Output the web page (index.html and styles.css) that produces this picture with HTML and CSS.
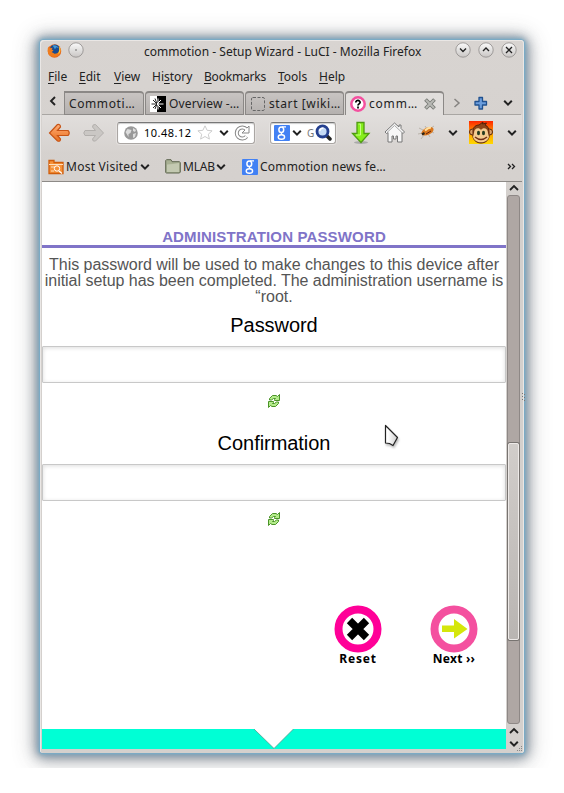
FILE: index.html
```html
<!DOCTYPE html>
<html lang="en">
<head>
<meta charset="utf-8">
<title>commotion - Setup Wizard - LuCI</title>
<link rel="stylesheet" href="styles.css">
</head>
<body>
<svg class="defs" width="0" height="0">
  <defs>
    <linearGradient id="btn" x2="0" y2="1"><stop stop-color="#fafafa"/><stop offset="1" stop-color="#c9c6c4"/></linearGradient>
    <linearGradient id="org" x2="0" y2="1"><stop stop-color="#ffad76"/><stop offset="1" stop-color="#e9701f"/></linearGradient>
    <linearGradient id="fire" x2="0" y2="1"><stop stop-color="#ff2500"/><stop offset=".5" stop-color="#ff9b00"/><stop offset="1" stop-color="#ffd900"/></linearGradient>
    <linearGradient id="cur"><stop offset=".2" stop-color="#fff"/><stop offset="1" stop-color="#ccc"/></linearGradient>
    <symbol id="down" viewBox="0 0 10 8"><path d="M1.2 1.8 5 5.6 8.8 1.8" fill="none" stroke="currentColor" stroke-width="2"/></symbol>
    <symbol id="up" viewBox="0 0 10 8"><path d="M1 6 5 2 9 6" fill="none" stroke="currentColor" stroke-width="1.8"/></symbol>
    <symbol id="google" viewBox="0 0 16 16"><rect width="16" height="16" rx="1" fill="#4281f4"/><g fill="none" stroke="#fff"><ellipse cx="7.3" cy="4.8" rx="2.4" ry="2.8" stroke-width="1.5"/><path d="M8 1.8h4M8 7.6c-1.3.9-.6 1.5.5 2" stroke-width="1.2"/><ellipse cx="7.4" cy="12" rx="3.2" ry="2.2" stroke-width="1.4"/></g></symbol>
    <symbol id="refresh" viewBox="0 0 12 14"><g fill="#b4ec8b" stroke="#4a9328" stroke-width="1"><path d="M1.500 6V4.500L4.500 1.500H8L9.500 2.500L11.500 .5V6.500H6.500V5.500L7.500 4.500H5.500L3.500 6z"/><path d="M10.500 8V9.500L7.500 12.500H4L2.500 11.500L.5 13.500V7.500H5.500V8.500L4.500 9.500H6.500L8.500 8z"/></g></symbol>
  </defs>
</svg>
<div class="backdrop">
<div class="window">
  <header class="titlebar">
    <svg class="fox" viewBox="0 0 16 16"><circle cx="8" cy="8" r="7.2" fill="#e4681b"/><circle cx="8.500" cy="6.500" r="5.500" fill="#174c91"/><path d="M6 2c3-1 6 1 6.500 3L10 4 8.500 6z" fill="#4198d7"/><path d="M1.300 3.500 3 5l3-.5-1 2 2 1-2 1.500 3 2c3 0 5-2 5-5l-.5-3c3 3 2.500 7 .5 9-3 3-8 3-11 0C.5 10 .3 6 1.300 3.500" fill="#ef7c1d"/><path d="M13 3c2 3 1.500 7-1 8.500 1-3 1.500-5 1-8.500" fill="#ffd43d"/></svg>
    <svg class="wbtn pin" viewBox="0 0 16 16"><circle cx="8" cy="8" r="7.200" fill="url(#btn)" stroke="#8f8c8a" stroke-width=".8"/><rect x="7.500" y="7.500" width="1" height="1"/></svg>
    <span class="wtitle">commotion - Setup Wizard - LuCI - Mozilla Firefox</span>
    <svg class="wbtn" viewBox="0 0 16 16"><circle cx="8" cy="8" r="7.200" fill="url(#btn)" stroke="#8f8c8a" stroke-width=".8"/><path d="m5 6.500 3 3 3-3" fill="none" stroke="#222" stroke-width="1.400"/></svg>
    <svg class="wbtn" viewBox="0 0 16 16"><circle cx="8" cy="8" r="7.200" fill="url(#btn)" stroke="#8f8c8a" stroke-width=".8"/><path d="m5 9 3-3 3 3" fill="none" stroke="#222" stroke-width="1.400"/></svg>
    <svg class="wbtn" viewBox="0 0 16 16"><circle cx="8" cy="8" r="7.200" fill="url(#btn)" stroke="#8f8c8a" stroke-width=".8"/><path d="m5 5 6 6m0-6-6 6" fill="none" stroke="#222" stroke-width="1.300"/></svg>
  </header>
  <nav class="menu">
    <span class="m-file"><u>F</u>ile</span><span class="m-edit"><u>E</u>dit</span><span class="m-view"><u>V</u>iew</span><span class="m-hist">Hi<u>s</u>tory</span><span class="m-book"><u>B</u>ookmarks</span><span class="m-tool"><u>T</u>ools</span><span class="m-help"><u>H</u>elp</span>
  </nav>
  <div class="tabs">
    <div class="tabprev"><svg width="8" height="10" viewBox="0 0 8 10"><path d="M6 1 2 5l4 4" fill="none" stroke="#222" stroke-width="1.900"/></svg></div>
    <div class="tab first"><span class="t1">Commoti…</span></div>
    <div class="tab"><svg width="16" height="16" viewBox="0 0 16 16"><path fill="#fff" d="M0 0h7v16H0z"/><path d="M7 0h9v16H7z"/><path d="M1.500 8H7M3 4l4 4-4 4M5 2.500 7 8l-2 5" fill="none" stroke="#222"/><path d="M7 8h6.500M7 8l4-4M7 8l4 4M8 2.500v11" stroke="#fff"/></svg><span class="t2">Overview -…</span></div>
    <div class="tab"><svg width="16" height="16" viewBox="0 0 16 16"><rect x="1.500" y="1.500" width="13" height="13" rx="1.500" fill="none" stroke="#666" stroke-dasharray="3 1.500"/></svg><span class="t3">start [wiki…</span></div>
    <div class="tab active"><svg width="16" height="16" viewBox="0 0 16 16"><circle cx="8" cy="8" r="6.700" fill="#fff" stroke="#f4509f" stroke-width="2.500"/><path d="M5.800 6.500c0-3 4.500-2.500 4.300 0C10 8 8 7.800 8 9.500M8 10.500v2" fill="none" stroke="#000" stroke-width="1.700"/></svg><span class="t4">comm…</span><svg class="close" width="12" height="12" viewBox="0 0 12 12"><path d="m1.500 1.500 9 9m0-9-9 9" stroke="#777a75" stroke-width="3.800"/><path d="m2 2 8 8m0-8-8 8" stroke="#b8b9b5" stroke-width="2"/></svg></div>
    <div class="tabtools">
      <svg width="8" height="10" viewBox="0 0 8 10"><path d="m1.500 1 4.500 4-4.500 4" fill="none" stroke="#858380" stroke-width="1.500"/></svg>
      <svg class="plus" width="14" height="14" viewBox="0 0 14 14"><path d="M5 1.500h3.500v4h4V9h-4v4H5V9H1V5.500h4z" fill="#6b9ddc" stroke="#20518f" stroke-width="1.300" stroke-linejoin="round"/></svg>
      <svg class="more" width="10" height="8"><use href="#down"/></svg>
    </div>
  </div>
  <div class="navbar">
    <svg class="back" width="23" height="20" viewBox="0 0 23 20"><path d="M9.500 1.500 1.500 10l8 8q3 1 3-2l-3-3.500H20q2.500-2.500 0-5H9.500l3-3.500q0-3-3-2.500" fill="url(#org)" stroke="#c75416" stroke-width="1.200"/></svg>
    <svg class="fwd" width="23" height="20" viewBox="0 0 23 20"><path d="m13.500 1.500 8 8.500-8 8q-3 1-3-2l3-3.500H3Q.5 10 3 7.500h10.500l-3-3.500q0-3 3-2.500" fill="#cac7c4" stroke="#b2afac"/></svg>
    <div class="field url">
      <svg width="14" height="14" viewBox="0 0 14 14"><circle cx="7" cy="7" r="6.800" fill="#999"/><path d="m1.500 6 2-3 4 1-1 3-2 1v3zM9 2l3 2-1 2-2-1zm0 6 3-1-1 4-2 1z" fill="#ddd"/></svg>
      <span class="addr">10.48.12</span>
      <svg class="star" width="16" height="15" viewBox="0 0 16 15"><path d="m8 .8 2.100 4.500 5 .5-3.800 3.400 1.100 4.900L8 11.500l-4.400 2.600 1.100-4.900L.9 5.800l5-.5z" fill="#fff" stroke="#ccc"/></svg>
      <svg class="udown" width="10" height="8"><use href="#down"/></svg>
      <svg class="reload" width="16" height="16" viewBox="0 0 16 16"><path d="M12.500 11.500a5.500 5.500 0 1 1 0-7" fill="none" stroke="#888" stroke-width="4"/><path d="M15 1v7H8z" fill="#fff" stroke="#888"/><path d="M12.500 11.500a5.500 5.500 0 1 1 0-7" fill="none" stroke="#fff" stroke-width="2"/></svg>
    </div>
    <div class="field search">
      <svg width="16" height="16"><use href="#google"/></svg>
      <svg class="sdown" width="10" height="8"><use href="#down"/></svg>
      <span class="g">G</span>
      <svg class="lens" width="17" height="17" viewBox="0 0 17 17"><path d="m11 11 4 4" stroke="#222" stroke-width="3.500" stroke-linecap="round"/><circle cx="7.500" cy="7.500" r="5.500" fill="#c4daf6" stroke="#25408f" stroke-width="2.800"/><path d="M4.500 7q1-3 4-3" fill="none" stroke="#fff" stroke-width="1.500"/></svg>
    </div>
    <svg class="dl" width="20" height="24" viewBox="0 0 20 24"><ellipse cx="10" cy="21.500" rx="7" ry="1.500" fill="#aaa"/><path d="M6 1.500h7v11h5L10 21.500 1.500 12.500H6z" fill="#86ee1c" stroke="#4f9c12" stroke-width="1.300"/><path d="M7.500 3h2v11H5" fill="none" stroke="#c4ff83"/></svg>
    <svg class="home" width="21" height="21" viewBox="0 0 21 21"><path d="M10.500 1 1 10l1.500 1.500 1.500-1V20h4v-6h1.500v3H12v-3h1.500v6H18v-9.500l1 1 1.500-1.500L17 6.500V3h-2v2z" fill="#f7f7f7" stroke="#777" stroke-linejoin="round"/><path d="m3 10.500 7.500-7 7.500 7" fill="none" stroke="#aaa"/></svg>
    <svg class="bug" width="18" height="15" viewBox="0 0 18 15"><path d="m5 5-4-2m4 5-5 1m6 1-3 4m7-5 2 3m0-6 4 2M9 4 7 1m6 2 3-2" stroke="#aaa498" stroke-width=".7" fill="none"/><ellipse cx="9.500" cy="6.300" rx="6.500" ry="3.600" transform="rotate(-25 9.500 6.300)" fill="#d9771d"/><path d="M7 5.500q3-3 6-3" stroke="#ffe0a0" stroke-width="2" fill="none"/><path d="M3.500 8.500 6 7l1 2-2.500 1.500z" fill="#2c2518"/><path d="m8 9 5-3" stroke="#641e09"/></svg>
    <svg class="ddown" width="10" height="8"><use href="#down"/></svg>
    <svg class="monkey" width="24" height="23" viewBox="0 0 24 23"><path fill="url(#fire)" d="M0 0h24v23H0z"/><circle cx="3.500" cy="11" r="3" fill="#dba169" stroke="#5a260b"/><circle cx="20.500" cy="11" r="3" fill="#dba169" stroke="#5a260b"/><path d="M4 10c0-4 3-6 6-6l4-3-.5 2 4-1-1.500 2c3 1 4 4 4 7v5c-2 8-14 8-16 0z" fill="#8c4619" stroke="#542008"/><path d="M5 12c0-5 5-6 7-3 2-3 7-2 7 3l1 4c-2 7-14 7-16 0z" fill="#f4cb91"/><ellipse cx="9.500" cy="12" rx="1.500" ry="2.200" fill="#263b20"/><ellipse cx="14.500" cy="12" rx="1.500" ry="2.200" fill="#263b20"/><path d="M6 16q6 5 12 0" fill="none" stroke="#702f17" stroke-width="1.500"/></svg>
    <svg class="edown" width="10" height="8"><use href="#down"/></svg>
  </div>
  <div class="bookmarks">
    <svg class="bmv" width="16" height="16" viewBox="0 0 16 16"><path d="M1 14.500v-13h5v2h9v11z" fill="#f59138" stroke="#cf5d0b" stroke-width="1.300"/><path d="M1 5.500h14M3 8h4M3 12h3" stroke="#ffe0bd"/><circle cx="9" cy="9.500" r="2.700" fill="none" stroke="#fff"/><path d="m11 12 3 2.500" stroke="#fff" stroke-width="1.300"/></svg>
    <span class="b1">Most Visited</span><svg class="bd1" width="10" height="8"><use href="#down"/></svg>
    <svg class="bml" width="16" height="15" viewBox="0 0 16 15"><path d="M.7 13.500V1.500L1.500.7H6l1 2h7.500l.8 1V13l-.8 1H1.500z" fill="#a8b093" stroke="#5e664f"/><path d="M2 13V5.500l6-.5 6-1v9z" fill="#c3c9b1"/></svg>
    <span class="b2">MLAB</span><svg class="bd2" width="10" height="8"><use href="#down"/></svg>
    <svg class="bg" width="16" height="16"><use href="#google"/></svg>
    <span class="b3">Commotion news fe…</span>
    <svg class="over" width="9" height="7" viewBox="0 0 9 7"><path d="m1 1 2.500 2.500L1 6m4-5 2.500 2.500L5 6" fill="none" stroke="#222" stroke-width="1.300"/></svg>
  </div>
  <div class="view">
    <main class="page">
      <h1><span>ADMINISTRATION PASSWORD</span></h1>
      <p class="intro"><span class="l1">This password will be used to make changes to this device after</span><br><span class="l2">initial setup has been completed. The administration username is</span><br><span class="l3">“root.</span></p>
      <label class="pw" for="pw"><span>Password</span></label>
      <input id="pw" type="password">
      <svg class="refresh" width="12" height="14"><use href="#refresh"/></svg>
      <label class="cf" for="cf"><span>Confirmation</span></label>
      <input id="cf" type="password">
      <svg class="refresh" width="12" height="14"><use href="#refresh"/></svg>
      <div class="actions">
        <div class="action"><svg width="48" height="48" viewBox="0 0 48 48"><circle cx="24" cy="24" r="19.500" fill="#fff" stroke="#ff0098" stroke-width="8"/><path d="m15.500 15.500 17 17m0-17-17 17" stroke="#000" stroke-width="7.500"/></svg><span class="reset">Reset</span></div>
        <div class="action"><svg width="48" height="48" viewBox="0 0 48 48"><circle cx="24" cy="24" r="19.500" fill="#fff" stroke="#f4509f" stroke-width="8"/><path d="M12 20.500h12V14l13.500 10L24 33.500V27H12z" fill="#d5e60b"/></svg><span class="next">Next ››</span></div>
      </div>
      <footer><svg width="464" height="20" viewBox="0 0 464 20"><path d="M0 0h212l20 19.500L251.500 0H464v20H0z" fill="#00ffd5"/><path d="m212 0 20 19.500L251.500 0" fill="none" stroke="#4e9d8e" stroke-width=".8"/></svg></footer>
    </main>
    <div class="scroll">
      <svg width="10" height="8"><use href="#up"/></svg>
      <div class="track"><div class="thumb"></div></div>
      <svg width="10" height="8"><use href="#up"/></svg>
      <svg class="sd" width="10" height="8"><use href="#down"/></svg>
    </div>
  </div>
  <svg class="grip" width="6" height="6"><path d="M4 0h1v1H4zM2 2h1v1H2zM4 2h1v1H4zM0 4h1v1H0zM2 4h1v1H2zM4 4h1v1H4z" fill="#888"/></svg>
  <svg class="dots" width="3" height="8"><path d="M0 0h1v1H0zM2 1h1v1H2zM0 3h1v1H0zM2 4h1v1H2zM0 6h1v1H0zM2 7h1v1H2z" fill="#777"/></svg>
</div>
</div>
<svg class="cursor" width="18" height="25" viewBox="0 0 18 25"><path d="M1.500 1.500v17.500l4 .5 3.500 2 4.500-8z" fill="url(#cur)" stroke="#222" stroke-width="1.200" stroke-linejoin="round"/></svg>
</body>
</html>
```
FILE: styles.css
```css
* { box-sizing: border-box; }
body { margin: 0; width: 564px; height: 793px; background: #fff; overflow: hidden; font: 12px "Noto Sans", sans-serif; color: #222; }
svg { display: block; flex: none; }
.defs { position: absolute; }
span { white-space: nowrap; }
.backdrop { height: 768px; padding: 40px; overflow: hidden; }
.window { position: relative; width: 484px; height: 713px; border-radius: 4px 4px 3px 3px; background: linear-gradient(#d8d4d1, #d4d0cd 180px); padding: 0 2px 4px; box-shadow: 0 0 1px 1px #7aabc6, 0 0 4px 2px rgba(122,171,198,.8), 0 1px 12px 4px rgba(70,90,112,.6), 0 2px 22px 6px rgba(60,60,60,.28), inset 1px 1px 0 #eae7e5, inset -1px 0 0 #eae7e5; }

.titlebar { display: flex; height: 24px; padding: 2px 5px 0 5px; align-items: flex-start; }
.fox { width: 15px; height: 16px; margin-top: 1px; }
.wbtn { width: 16px; height: 16px; margin-right: 7px; }
.wbtn:last-child { margin-right: 0; }
.pin { margin: 0 60px 0 6px; }
.wtitle { width: 312px; line-height: 20px; letter-spacing: .03px; }

.menu { display: flex; height: 27px; padding-left: 6px; line-height: 26px; }
.menu u { text-underline-offset: 2px; }
.m-file { width: 31px; }
.m-edit { width: 35px; }
.m-view { width: 38px; }
.m-hist { width: 52px; }
.m-book { width: 74px; letter-spacing: -.2px; }
.m-tool { width: 41px; }

.tabs { display: flex; height: 24px; width: 479px; }
.tabprev { width: 22px; padding: 5px 0 0 7px; border-bottom: 1px solid #a9a6a3; }
.tab { display: flex; align-items: center; width: 99px; height: 24px; margin-right: 1px; padding: 1px 0 0 4px; border: 1px solid #8b8886; border-top-width: 2px; border-radius: 4px 4px 0 0; background: linear-gradient(#c8c4c2, #b5b1af); line-height: 22px; }
.tab svg { margin-right: 3px; }
.tab.first { width: 80px; border-radius: 0 4px 0 0; }
.t1, .t3 { letter-spacing: .6px; }
.t2 { letter-spacing: .15px; }
.t4 { letter-spacing: .8px; }
.tab.active { background: #e1dedc; border-bottom: 0; margin-right: 0; padding-top: 0; }
.tab .close { margin: 0 0 0 6px; }
.tabtools { display: flex; align-items: center; flex: 1; border-bottom: 1px solid #a9a6a3; padding-left: 9px; }
.plus { margin-left: 13px; }
.more { margin-left: 15px; }

.navbar { display: flex; align-items: center; height: 37px; padding: 0 0 2px 6px; background: linear-gradient(#e1dedc, #d6d2cf); }
.fwd { margin-left: 11px; }
.field { display: flex; align-items: center; height: 22px; background: #fff; border: 1px solid #aaa6a3; border-top-color: #777; border-radius: 3px; box-shadow: inset 0 1px 1px #ccc, 0 0 0 1px #e5e2e0; }
.url { width: 138px; margin-left: 12px; padding-left: 6px; }
.addr { width: 52px; margin-left: 6px; font-size: 11px; letter-spacing: .5px; color: #000; }
.star { margin-left: 1px; }
.udown { margin-left: 6px; }
.reload { margin-left: 5px; }
.search { width: 66px; margin-left: 15px; padding-left: 3px; }
.sdown { margin-left: 2px; }
.g { width: 7px; margin: 0 1px 0 5px; font-size: 10px; color: #777; }
.dl { margin-left: 15px; }
.home { margin-left: 13px; }
.bug { margin-left: 13px; }
.ddown { margin-left: 12px; }
.monkey { margin-left: 11px; }
.edown { margin-left: 14px; }

.bookmarks { display: flex; align-items: center; height: 30px; padding-left: 6px; border-bottom: 1px solid #8d8a87; }
.b1 { width: 73px; margin-left: 2px; letter-spacing: .25px; }
.bd1 { margin-left: 1px; }
.bml { margin-left: 15px; }
.b2 { width: 30px; margin-left: 2px; letter-spacing: -.2px; }
.bd2 { margin-left: 3px; }
.bg { margin-left: 16px; }
.b3 { width: 130px; margin-left: 2px; letter-spacing: .2px; }
.over { margin-left: 117px; }

.view { display: flex; height: 567px; }
.page { width: 464px; background: #fff; display: flex; flex-direction: column; font-family: "Liberation Sans", sans-serif; text-align: center; color: #000; }
h1 { margin: 0; height: 66px; padding-top: 47px; border-bottom: 3px solid #8074c8; color: #8074c8; font-size: 15px; line-height: 16px; letter-spacing: .15px; }
.intro { margin: 9px 0 0; height: 48px; font-size: 16px; line-height: 16px; color: #555; }
.l1, .l2 { letter-spacing: -.03px; }
label { display: block; font-size: 20px; line-height: 24px; }
label span { letter-spacing: -.05px; }
.pw { margin-top: 8px; }
.cf { margin-top: 23px; }
.page input { flex: none; width: 464px; height: 37px; margin: 9px 0 0; border: 1px solid #c8c8c8; border-radius: 1px; background: #fff; box-shadow: inset 0 1px 4px #ddd; }
.refresh { margin: 11px 0 0 226px; }
.actions { display: flex; justify-content: flex-end; gap: 48px; height: 64px; margin-top: 79px; padding-right: 28px; }
.action { display: flex; flex-direction: column; align-items: center; width: 48px; font: 700 12px/12px "Noto Sans", sans-serif; }
.reset { letter-spacing: .8px; }
.next { letter-spacing: .25px; }
footer { margin-top: auto; }
.scroll { width: 15px; display: flex; flex-direction: column; align-items: center; }
.scroll > svg { margin-top: 2px; }
.scroll .sd { margin-top: 5px; }
.track { width: 13px; height: 529px; margin: 3px 0 1px; padding-top: 247px; border: 1px solid #8e8886; border-radius: 3px; background: #afa7a4; }
.thumb { height: 197px; width: 11px; border: 1px solid #eeeae8; border-radius: 2px; background: linear-gradient(#d1cdca, #b9b5b2); box-shadow: 0 0 0 1px #777370; }
.grip { position: absolute; right: 1px; bottom: 1px; }
.dots { position: absolute; right: -1px; top: 353px; }
.cursor { position: absolute; left: 384px; top: 424px; filter: drop-shadow(1px 2px 1px #bbb); }
```
